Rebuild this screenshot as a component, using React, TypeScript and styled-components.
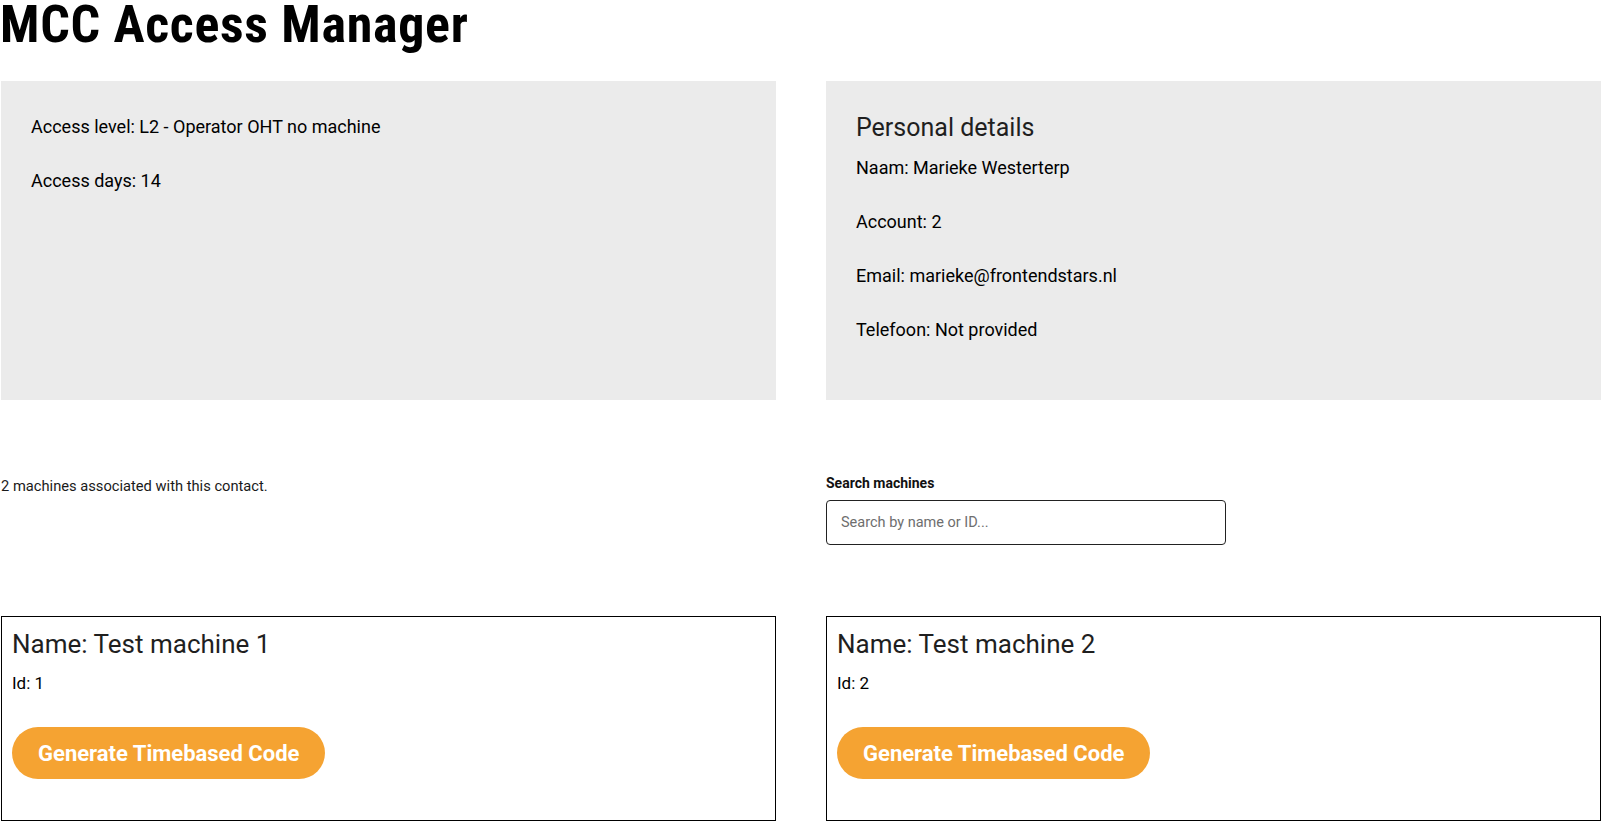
import React, { useState } from 'react';
import styled, { createGlobalStyle } from 'styled-components';

const GlobalStyle = createGlobalStyle`
  html, body {
    margin: 0;
    padding: 0;
    background: #ffffff;
    color: #111111;
    font-family: Roboto, "Liberation Sans", Arial, sans-serif;
    overflow: hidden;
  }
  * {
    box-sizing: border-box;
  }
`;

const Page = styled.main`
  padding: 0 0 0 1px;
  width: 1601px;
`;

const Title = styled.h1`
  margin: 0 0 31px -1px;
  font-family: "Liberation Sans Narrow", "Roboto", sans-serif;
  font-stretch: condensed;
  font-size: 52px;
  line-height: 50px;
  font-weight: 700;
  letter-spacing: 0.7px;
  color: #000000;
`;

const Columns = styled.div`
  display: grid;
  grid-template-columns: 1fr 1fr;
  column-gap: 50px;
`;

const InfoPanel = styled.section`
  background: #ebebeb;
  padding: 32px 30px 30px;
  min-height: 318px;
`;

const PanelTitle = styled.h2`
  margin: 0 0 11px;
  font-size: 25px;
  line-height: 30px;
  font-weight: 400;
  color: #1f1f1f;
`;

const Line = styled.p`
  margin: 0 0 27px;
  font-size: 18px;
  line-height: 27px;
  color: #000000;
`;

const SearchRow = styled(Columns)`
  margin-top: 73px;
  align-items: start;
`;

const Count = styled.p`
  margin: 3px 0 0;
  font-size: 14.7px;
  line-height: 20px;
  color: #1a1a1a;
`;

const SearchField = styled.label`
  display: flex;
  flex-direction: column;
  gap: 7px;
`;

const FieldLabel = styled.span`
  font-size: 14px;
  line-height: 20px;
  font-weight: 700;
  color: #111111;
`;

const SearchInput = styled.input`
  width: 400px;
  height: 45px;
  padding: 0 14px;
  border: 1px solid #222222;
  border-radius: 4px;
  font-family: inherit;
  font-size: 14.5px;
  color: #111111;
  background: #ffffff;

  &::placeholder {
    color: #6e6e6e;
  }
`;

const CardRow = styled(Columns)`
  margin-top: 71px;
`;

const MachineCard = styled.article`
  border: 1px solid #000000;
  height: 205px;
  padding: 12px 10px;
`;

const MachineName = styled.h3`
  margin: 0 0 11px;
  font-size: 26px;
  line-height: 31px;
  font-weight: 400;
  color: #1f1f1f;
`;

const MachineId = styled.p`
  margin: 0 0 31px;
  font-size: 17px;
  line-height: 25px;
  color: #000000;
`;

const CodeButton = styled.button`
  height: 52px;
  padding: 0 26px;
  border: none;
  border-radius: 26px;
  background: #f5a332;
  color: #ffffff;
  font-family: inherit;
  font-size: 22px;
  font-weight: 700;
  cursor: pointer;
`;

const machines = [
  { id: 1, name: 'Test machine 1' },
  { id: 2, name: 'Test machine 2' },
];

export default function App() {
  const [query, setQuery] = useState('');

  const visible = machines.filter(
    (m) =>
      query === '' ||
      m.name.toLowerCase().includes(query.toLowerCase()) ||
      String(m.id) === query.trim(),
  );

  return (
    <>
      <GlobalStyle />
      <Page>
        <Title>MCC Access Manager</Title>

        <Columns>
          <InfoPanel>
            <Line>Access level: L2 - Operator OHT no machine</Line>
            <Line>Access days: 14</Line>
          </InfoPanel>
          <InfoPanel>
            <PanelTitle>Personal details</PanelTitle>
            <Line>Naam: Marieke Westerterp</Line>
            <Line>Account: 2</Line>
            <Line>Email: marieke@frontendstars.nl</Line>
            <Line>Telefoon: Not provided</Line>
          </InfoPanel>
        </Columns>

        <SearchRow>
          <Count>{machines.length} machines associated with this contact.</Count>
          <SearchField>
            <FieldLabel>Search machines</FieldLabel>
            <SearchInput
              placeholder="Search by name or ID..."
              value={query}
              onChange={(e) => setQuery(e.target.value)}
            />
          </SearchField>
        </SearchRow>

        <CardRow>
          {visible.map((machine) => (
            <MachineCard key={machine.id}>
              <MachineName>Name: {machine.name}</MachineName>
              <MachineId>Id: {machine.id}</MachineId>
              <CodeButton>Generate Timebased Code</CodeButton>
            </MachineCard>
          ))}
        </CardRow>
      </Page>
    </>
  );
}
